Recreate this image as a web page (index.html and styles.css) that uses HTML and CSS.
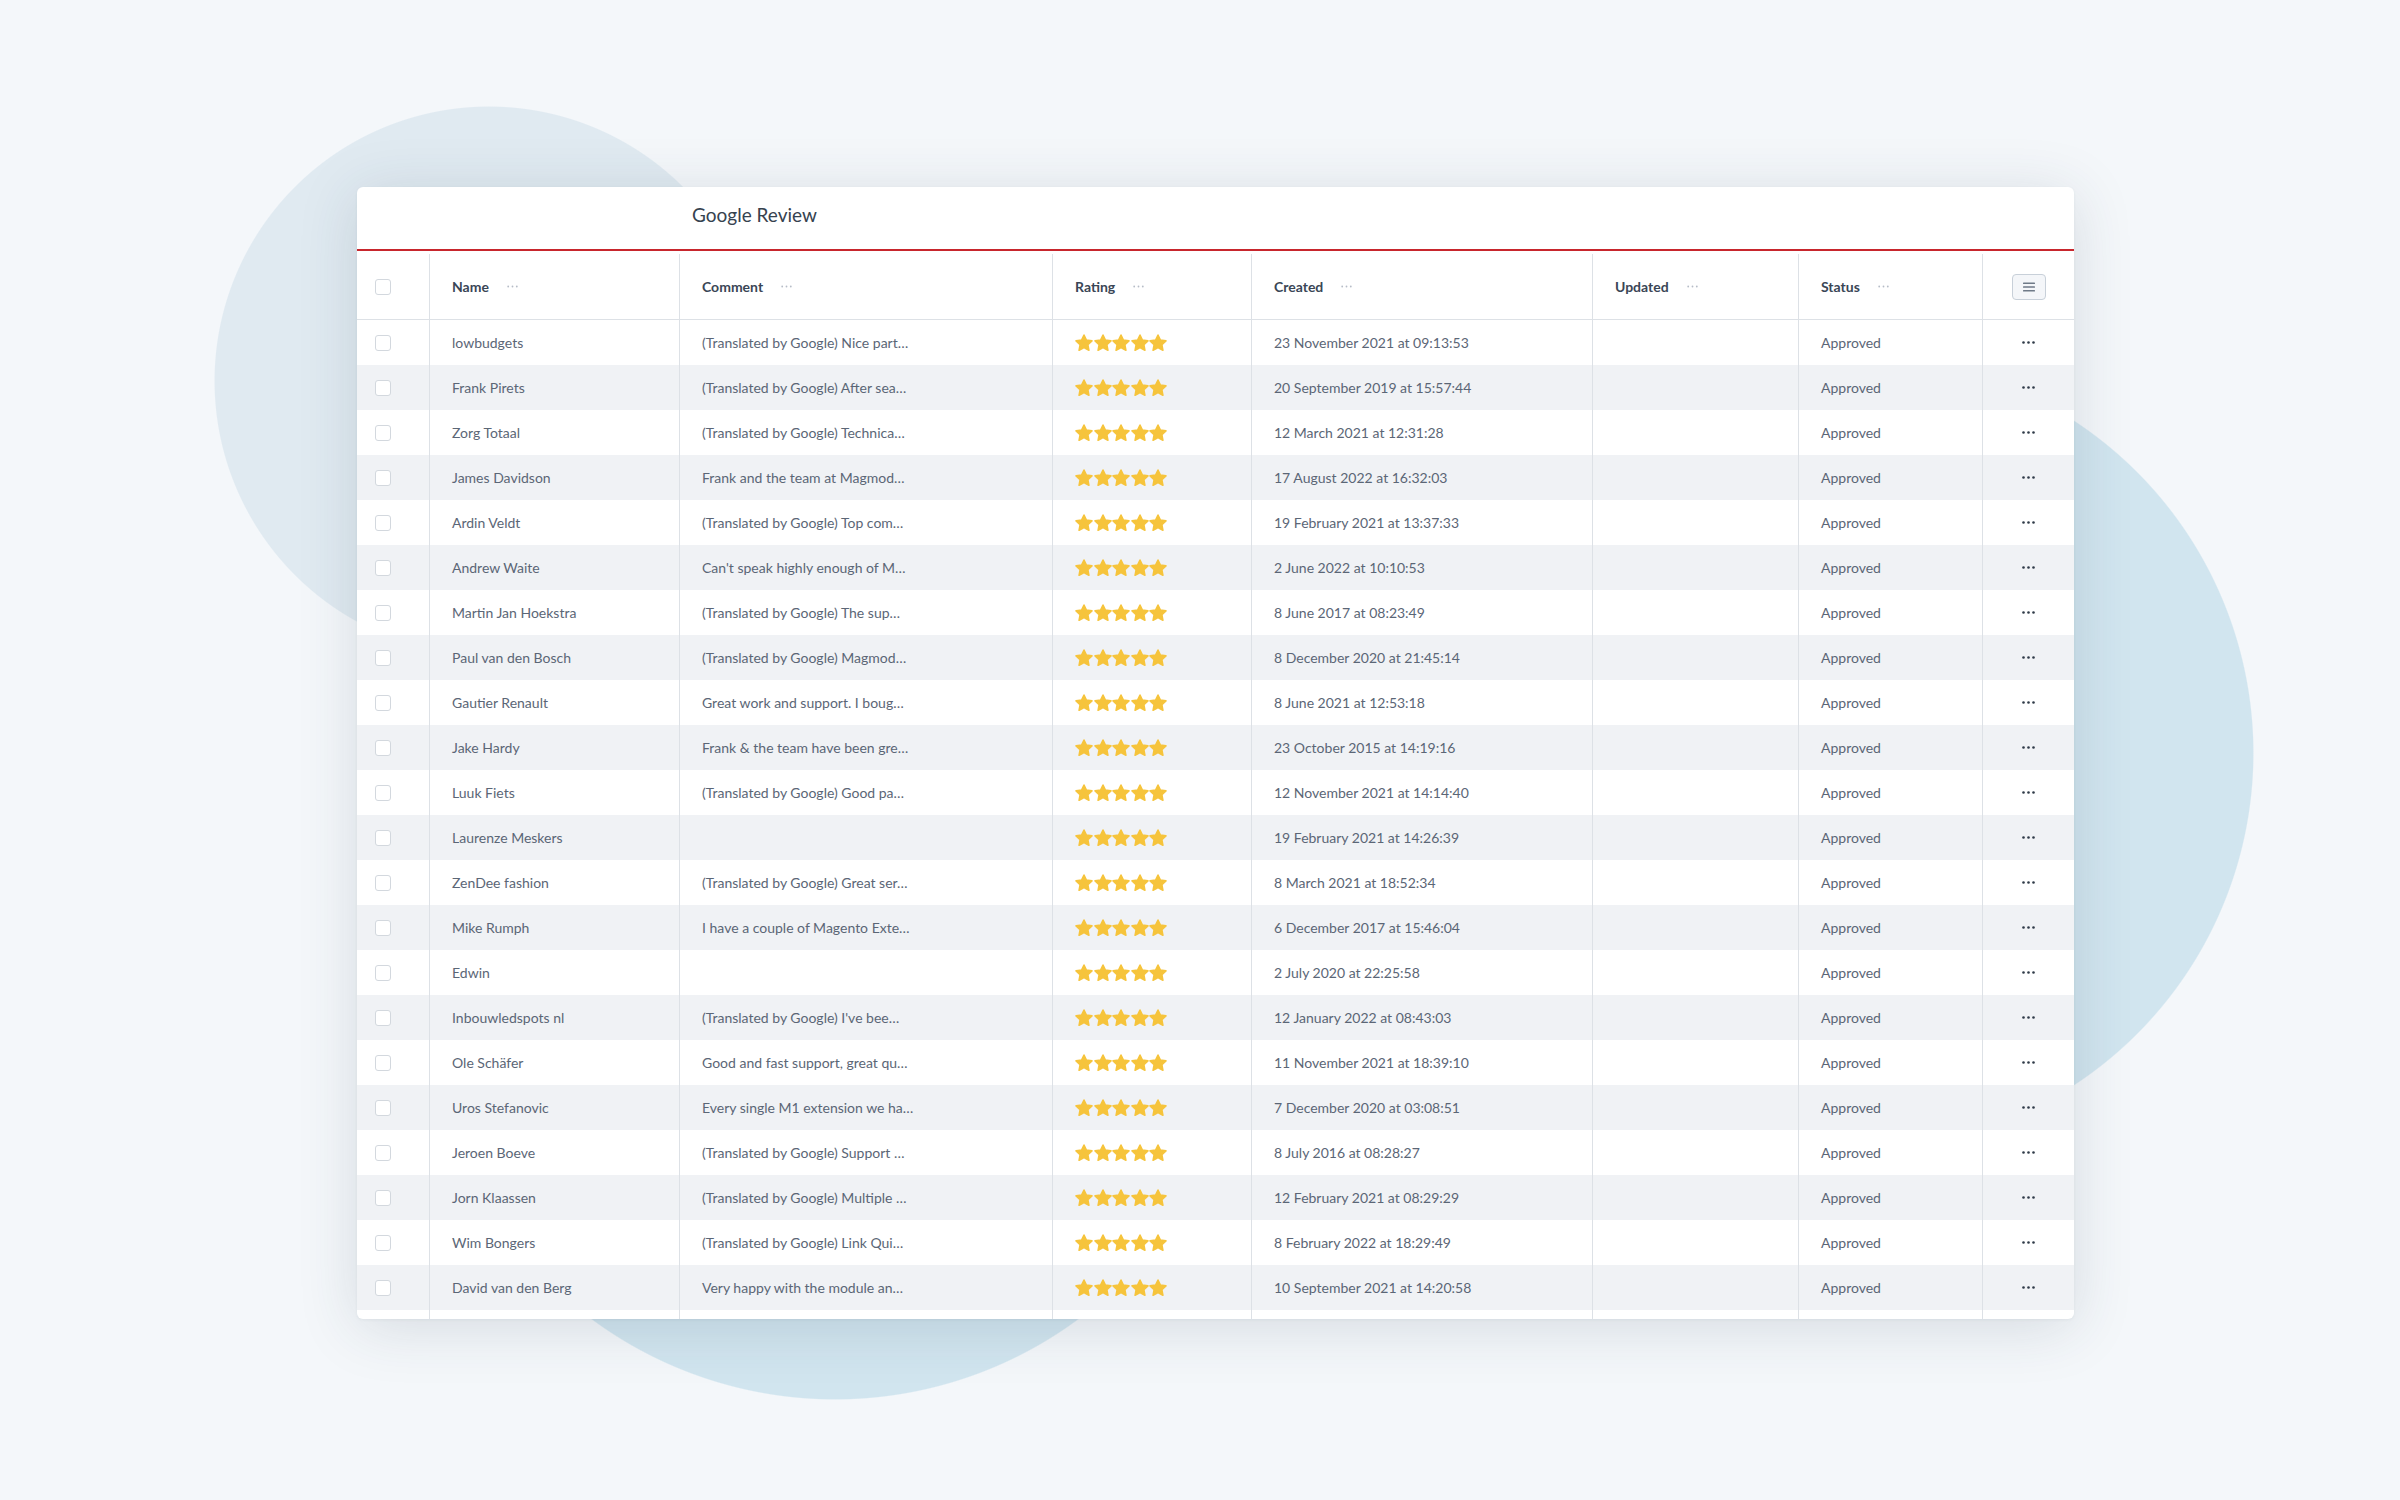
FILE: index.html
```html
<!DOCTYPE html>
<html lang="en">
<head>
<meta charset="utf-8">
<title>Google Review</title>
<link rel="stylesheet" href="styles.css">
</head>
<body>
<svg width="0" height="0" class="defs" aria-hidden="true">
  <defs>
    <symbol id="star" viewBox="1.6 1.8 20.8 20.4">
      <path d="M12 2.8l2.8 5.9 6.4.8-4.7 4.5 1.2 6.4L12 17.2l-5.7 3.2 1.2-6.4-4.7-4.5 6.4-.8z" fill="#f6c43c" stroke="#f6c43c" stroke-width="1.8" stroke-linejoin="round"/>
    </symbol>
    <symbol id="hdots" viewBox="0 0 11 3">
      <circle cx="1.2" cy="1.5" r="0.9" fill="#b6bdc7"/>
      <circle cx="5.5" cy="1.5" r="0.9" fill="#b6bdc7"/>
      <circle cx="9.8" cy="1.5" r="0.9" fill="#b6bdc7"/>
    </symbol>
  </defs>
</svg>
<div class="page">
  <div class="card">
    <div class="titlebar">Google Review</div>
    <div class="row head">
      <div class="cell check"><span class="box"></span></div>
      <div class="cell"><span class="label">Name</span><svg class="hdots"><use href="#hdots"/></svg></div>
      <div class="cell"><span class="label">Comment</span><svg class="hdots"><use href="#hdots"/></svg></div>
      <div class="cell"><span class="label">Rating</span><svg class="hdots"><use href="#hdots"/></svg></div>
      <div class="cell"><span class="label">Created</span><svg class="hdots"><use href="#hdots"/></svg></div>
      <div class="cell"><span class="label">Updated</span><svg class="hdots"><use href="#hdots"/></svg></div>
      <div class="cell"><span class="label">Status</span><svg class="hdots"><use href="#hdots"/></svg></div>
      <div class="cell action"><span class="menubtn"><svg width="12" height="10" viewBox="0 0 12 10"><rect x="0" y="0.5" width="12" height="1.6" rx="0.6" fill="#6f7a88"/><rect x="0" y="4.2" width="12" height="1.6" rx="0.6" fill="#6f7a88"/><rect x="0" y="7.9" width="12" height="1.6" rx="0.6" fill="#6f7a88"/></svg></span></div>
    </div>
    <div class="body" id="rows"></div>
  </div>
</div>
<script src="app.js"></script>
</body>
</html>
```

FILE: app.js
```javascript
const data = [
  ["lowbudgets", "(Translated by Google) Nice part…", "23 November 2021 at 09:13:53"],
  ["Frank Pirets", "(Translated by Google) After sea…", "20 September 2019 at 15:57:44"],
  ["Zorg Totaal", "(Translated by Google) Technica…", "12 March 2021 at 12:31:28"],
  ["James Davidson", "Frank and the team at Magmod…", "17 August 2022 at 16:32:03"],
  ["Ardin Veldt", "(Translated by Google) Top com…", "19 February 2021 at 13:37:33"],
  ["Andrew Waite", "Can't speak highly enough of M…", "2 June 2022 at 10:10:53"],
  ["Martin Jan Hoekstra", "(Translated by Google) The sup…", "8 June 2017 at 08:23:49"],
  ["Paul van den Bosch", "(Translated by Google) Magmod…", "8 December 2020 at 21:45:14"],
  ["Gautier Renault", "Great work and support. I boug…", "8 June 2021 at 12:53:18"],
  ["Jake Hardy", "Frank &amp; the team have been gre…", "23 October 2015 at 14:19:16"],
  ["Luuk Fiets", "(Translated by Google) Good pa…", "12 November 2021 at 14:14:40"],
  ["Laurenze Meskers", "", "19 February 2021 at 14:26:39"],
  ["ZenDee fashion", "(Translated by Google) Great ser…", "8 March 2021 at 18:52:34"],
  ["Mike Rumph", "I have a couple of Magento Exte…", "6 December 2017 at 15:46:04"],
  ["Edwin", "", "2 July 2020 at 22:25:58"],
  ["Inbouwledspots nl", "(Translated by Google) I've bee…", "12 January 2022 at 08:43:03"],
  ["Ole Schäfer", "Good and fast support, great qu…", "11 November 2021 at 18:39:10"],
  ["Uros Stefanovic", "Every single M1 extension we ha…", "7 December 2020 at 03:08:51"],
  ["Jeroen Boeve", "(Translated by Google) Support …", "8 July 2016 at 08:28:27"],
  ["Jorn Klaassen", "(Translated by Google) Multiple …", "12 February 2021 at 08:29:29"],
  ["Wim Bongers", "(Translated by Google) Link Qui…", "8 February 2022 at 18:29:49"],
  ["David van den Berg", "Very happy with the module an…", "10 September 2021 at 14:20:58"]
];
const stars = '<span class="stars">' + '<svg class="star"><use href="#star"/></svg>'.repeat(5) + '</span>';
const dots = '<svg class="rdots" width="13" height="3" viewBox="0 0 13 3"><circle cx="1.5" cy="1.5" r="1.3" fill="#2f3a48"/><circle cx="6.5" cy="1.5" r="1.3" fill="#2f3a48"/><circle cx="11.5" cy="1.5" r="1.3" fill="#2f3a48"/></svg>';
const rows = document.getElementById('rows');
let html = '';
data.forEach(([name, comment, created]) => {
  html += '<div class="row">' +
    '<div class="cell check"><span class="box"></span></div>' +
    '<div class="cell">' + name + '</div>' +
    '<div class="cell">' + comment + '</div>' +
    '<div class="cell">' + stars + '</div>' +
    '<div class="cell">' + created + '</div>' +
    '<div class="cell"></div>' +
    '<div class="cell">Approved</div>' +
    '<div class="cell action">' + dots + '</div>' +
    '</div>';
});
html += '<div class="row">' + '<div class="cell check"></div>' + '<div class="cell"></div>'.repeat(6) + '<div class="cell action"></div></div>';
rows.innerHTML = html;
```

FILE: styles.css
```css
html, body {
  margin: 0;
  padding: 0;
}
body {
  width: 2400px;
  height: 1500px;
  overflow: hidden;
  font-family: Lato, "Open Sans", sans-serif;
  background-color: #f4f7fa;
  background-image:
    radial-gradient(circle 275px at 489px 381px, #e0eaf1 99.6%, rgba(224,234,241,0) 100%),
    radial-gradient(circle 398px at 1856px 753px, #d1e5ef 99.7%, rgba(209,229,239,0) 100%),
    radial-gradient(circle 410px at 835px 990px, #d1e5ef 99.7%, rgba(209,229,239,0) 100%);
  background-repeat: no-repeat;
}
.defs {
  position: absolute;
}
.page {
  padding: 187px 0 0 357px;
}
.card {
  width: 1717px;
  height: 1132px;
  background: #fff;
  border-radius: 6px;
  overflow: hidden;
  box-shadow: 0 8px 60px rgba(40, 60, 80, 0.15), 0 1px 3px rgba(40, 60, 80, 0.06);
}
.titlebar {
  height: 64px;
  box-sizing: border-box;
  padding-left: 335px;
  padding-bottom: 8px;
  display: flex;
  align-items: center;
  font-size: 19px;
  color: #36424f;
  border-bottom: 2px solid #c8262d;
}
.row {
  display: grid;
  grid-template-columns: 73px 250px 373px 199px 341px 206px 184px 91px;
  height: 45px;
  font-size: 14px;
  color: #5b6676;
}
.body .row:nth-child(even) {
  background: #f0f2f5;
}
.row.head {
  height: 69px;
  padding-top: 3px;
  border-bottom: 1px solid #dde1e6;
  color: #3a4656;
  box-sizing: border-box;
}
.cell {
  display: flex;
  align-items: center;
  padding-left: 22px;
  border-right: 1px solid #dde1e6;
  white-space: nowrap;
  overflow: hidden;
}
.cell.check {
  padding-left: 18px;
}
.cell.action {
  border-right: none;
  padding-left: 0;
  justify-content: center;
}
.box {
  width: 16px;
  height: 16px;
  box-sizing: border-box;
  border: 1px solid #d3d8de;
  border-radius: 3px;
  background: #fff;
}
.label {
  font-weight: 700;
  font-size: 14px;
}
.hdots {
  margin-left: 18px;
  width: 11px;
  height: 3px;
}
.menubtn {
  width: 34px;
  height: 26px;
  box-sizing: border-box;
  border: 1px solid #c8d0d9;
  border-radius: 4px;
  background: #f4f6f9;
  display: flex;
  align-items: center;
  justify-content: center;
}
.stars {
  display: flex;
  gap: 0.5px;
}
.star {
  width: 18px;
  height: 18px;
}
.rdots {
  display: block;
}
```
